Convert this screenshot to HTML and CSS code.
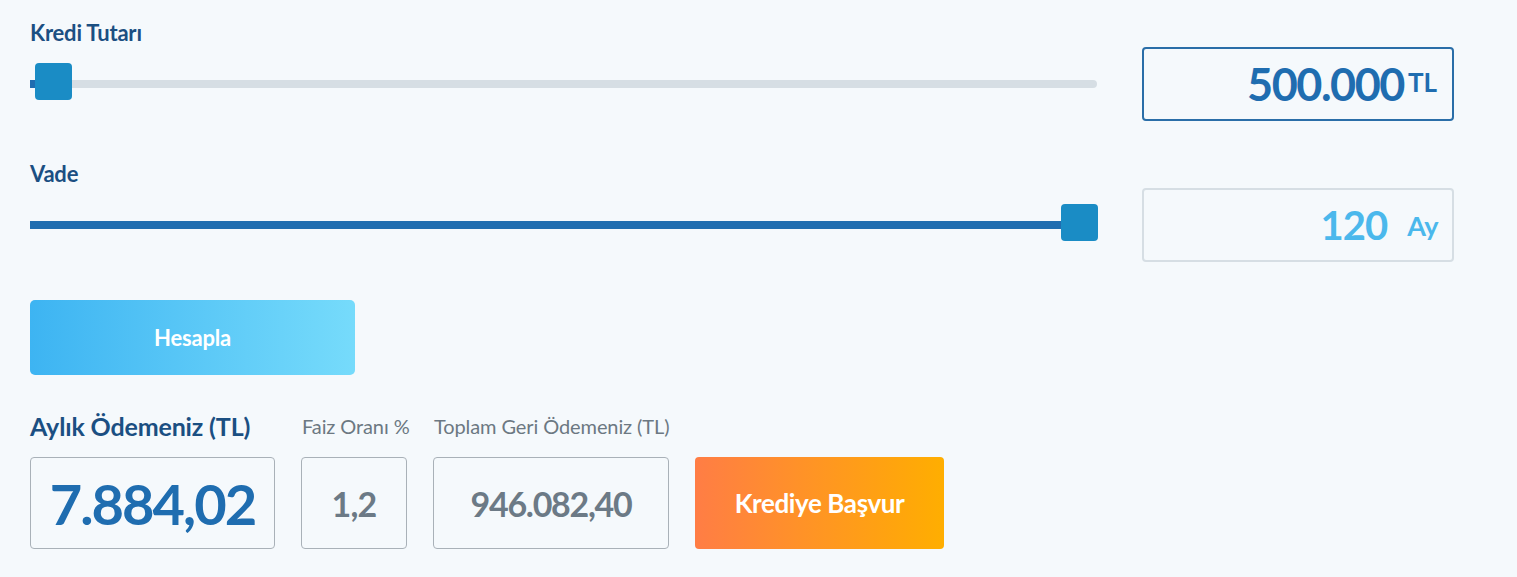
FILE: index.html
```html
<!DOCTYPE html>
<html lang="tr">
<head>
	<meta charset="UTF-8">
	<title>Kredi Hesaplama</title>
	<link rel="stylesheet" href="styles.css">
</head>
<body>
	<div class="calc">
		<!-- kredi tutari -->
		<div class="row">
			<div class="field">
				<label class="label">Kredi Tutarı</label>
				<div class="slider">
					<div class="track">
						<div class="fill" style="width: 5px;"></div>
					</div>
					<div class="thumb" style="left: 5px;"></div>
				</div>
			</div>
			<div class="valuebox active">
				<span class="num">500.000</span><span class="unit">TL</span>
			</div>
		</div>
		<!-- vade -->
		<div class="row">
			<div class="field">
				<label class="label">Vade</label>
				<div class="slider">
					<div class="track">
						<div class="fill" style="width: 100%;"></div>
					</div>
					<div class="thumb" style="left: 1031px;"></div>
				</div>
			</div>
			<div class="valuebox light">
				<span class="num">120</span><span class="unit">Ay</span>
			</div>
		</div>

		<button class="btn-calc">Hesapla</button>

		<!-- sonuc -->
		<div class="results">
			<div class="result r-main">
				<div class="rlabel big">Aylık Ödemeniz (TL)</div>
				<div class="rbox main">7.884,02</div>
			</div>
			<div class="result r-rate">
				<div class="rlabel">Faiz Oranı %</div>
				<div class="rbox">1,2</div>
			</div>
			<div class="result r-total">
				<div class="rlabel">Toplam Geri Ödemeniz (TL)</div>
				<div class="rbox">946.082,40</div>
			</div>
			<div class="result r-apply">
				<div class="rlabel"></div>
				<button class="btn-apply">Krediye Başvur</button>
			</div>
		</div>
	</div>
</body>
</html>
```

FILE: styles.css
```css
*{margin:0;padding:0;box-sizing:border-box;}
body {
	background: #f5f9fc;
	font-family: Lato, "Noto Sans", sans-serif;
	width: 1517px;
	height: 577px;
	overflow: hidden;
}
.calc {
	padding: 18px 0 0 30px;
}
.row {
	display: flex;
	align-items: flex-start;
	gap: 45px;
	margin-bottom: 38px;
}
.field {
	width: 1067px;
}
.label {
	display: block;
	height: 30px;
	line-height: 30px;
	font-size: 22px;
	font-weight: 700;
	color: #1b4f82;
	letter-spacing: -0.2px;
}
.slider {
	position: relative;
	height: 37px;
	margin-top: 15px;
}
.track {
	position: absolute;
	left: 0;
	right: 0;
	top: 17px;
	height: 8px;
	background: #d6dee4;
	border-radius: 0 4px 4px 0;
	overflow: hidden;
}
.fill {
	height: 100%;
	background: #1f6db0;
}
.thumb {
	position: absolute;
	top: 0;
	width: 37px;
	height: 37px;
	border-radius: 4px;
	background: #1a8cc5;
}
.valuebox {
	width: 312px;
	height: 74px;
	margin-top: 29px;
	border-radius: 4px;
	display: flex;
	align-items: center;
	justify-content: flex-end;
	padding-right: 14px;
	font-weight: 700;
}
.valuebox.active {
	border: 2px solid #2a6ea8;
	color: #1f6db0;
}
.valuebox.active .num {
	font-size: 45px;
	letter-spacing: -1.5px;
}
.valuebox.active .unit {
	font-size: 26px;
	margin-left: 4px;
	margin-bottom: 4px;
	padding-right: 1px;
}
.valuebox.light {
	border: 2px solid #d6dee4;
	color: #4bb8ec;
}
.valuebox.light .num {
	font-size: 40px;
	letter-spacing: -1px;
}
.valuebox.light .unit {
	font-size: 27px;
	font-weight: 700;
	margin-left: 20px;
	letter-spacing: -0.5px;
}
.btn-calc {
	display: block;
	width: 325px;
	height: 75px;
	border: none;
	border-radius: 5px;
	background: linear-gradient(to right, #3db4f2, #76dbfb);
	color: #fff;
	font-family: Lato, "Noto Sans", sans-serif;
	font-size: 22px;
	font-weight: 700;
	letter-spacing: -0.2px;
}
.results {
	display: flex;
	gap: 26px;
	margin-top: 37px;
}
.rlabel {
	height: 45px;
	padding-bottom: 20px;
	display: flex;
	align-items: flex-end;
	white-space: nowrap;
	padding-left: 1px;
	font-size: 20px;
	color: #6c7882;
	letter-spacing: -0.1px;
	line-height: 22px;
}
.rlabel.big {
	padding-left: 0;
	padding-bottom: 17px;
	font-size: 25px;
	font-weight: 700;
	color: #1b4f82;
	line-height: 28px;
	letter-spacing: -0.15px;
}
.rbox {
	height: 92px;
	border: 1px solid #a9b1b8;
	border-radius: 4px;
	display: flex;
	align-items: center;
	justify-content: center;
	font-size: 34px;
	font-weight: 700;
	color: #6c7a86;
	letter-spacing: -1.3px;
}
.rbox.main {
	font-size: 56px;
	color: #1f6db0;
	letter-spacing: -2px;
}
.r-rate .rbox {
	letter-spacing: -0.8px;
}
.r-main { width: 245px; }
.r-rate { width: 106px; }
.r-total { width: 236px; }
.r-apply { width: 249px; }
.btn-apply {
	display: block;
	width: 249px;
	height: 92px;
	border: none;
	border-radius: 4px;
	background: linear-gradient(to right, #ff7d45, #ffae00);
	color: #fff;
	font-family: Lato, "Noto Sans", sans-serif;
	font-size: 26px;
	font-weight: 700;
	letter-spacing: -0.4px;
}
```
